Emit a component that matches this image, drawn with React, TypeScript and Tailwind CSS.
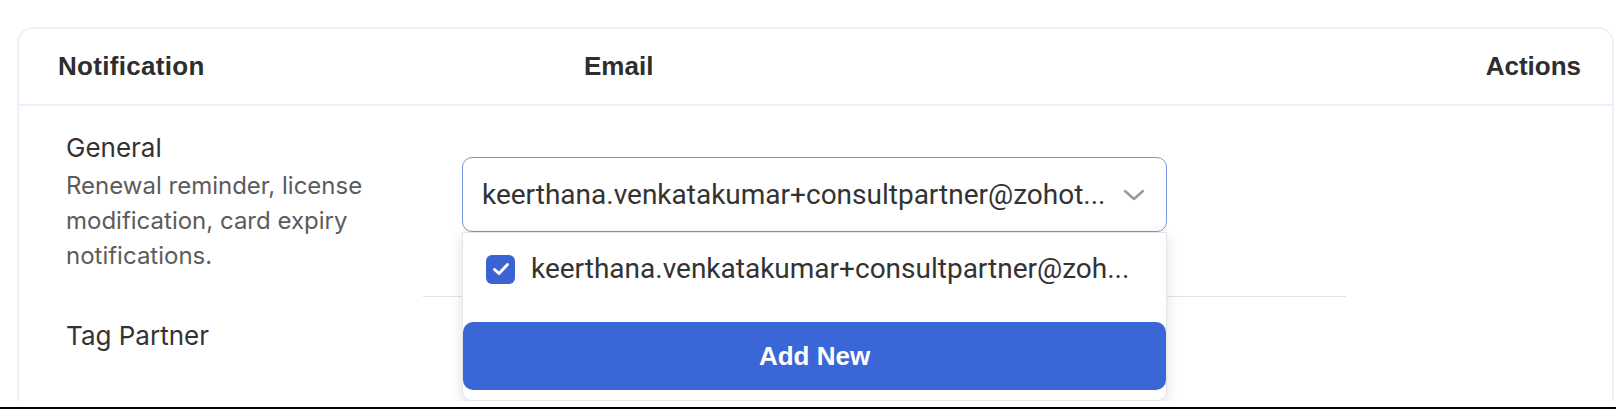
const EMAIL = "keerthana.venkatakumar+consultpartner@zohot...";
const EMAIL_ITEM = "keerthana.venkatakumar+consultpartner@zoh...";

const Chevron = () => (
    <svg width="22" height="12" viewBox="0 0 22 12" fill="none">
        <polyline points="2,2 11,10 20,2" stroke="#9a9a9a" strokeWidth="2.5" strokeLinecap="round" strokeLinejoin="round" />
    </svg>
);

const CheckBox = () => (
    <div className="w-[29px] h-[29px] rounded-[6px] bg-[#3b63d3] flex items-center justify-center shrink-0">
        <svg width="18" height="14" viewBox="0 0 18 14" fill="none">
            <polyline points="2.5,7.5 7,11.5 15.5,2.5" stroke="#ffffff" strokeWidth="3" strokeLinecap="round" strokeLinejoin="round" />
        </svg>
    </div>
);

const EmailSelect = () => {
    return (
        <div className="relative w-[705px] h-[75px]">
            {/* closed select */}
            <div className="h-full flex items-center justify-between pl-[19px] pr-[21px] border-[1.5px] border-[#7494e4] rounded-[10px] bg-white">
                <span className="text-[28px] text-[#333333] font-['Roboto',sans-serif] whitespace-nowrap">{EMAIL}</span>
                <Chevron />
            </div>

            {/* open menu */}
            <div className="absolute left-0 top-full w-full h-[169px] flex flex-col bg-white rounded-b-[10px] border border-[#e6e6e6] shadow-[0_4px_14px_rgba(0,0,0,0.13)] z-10">
                <div className="h-[72px] flex items-center pl-[23px] gap-[16px]">
                    <CheckBox />
                    <span className="text-[28px] text-[#333333] font-['Roboto',sans-serif] whitespace-nowrap">{EMAIL_ITEM}</span>
                </div>
                <button className="mt-[17px] h-[68px] w-full rounded-[10px] bg-[#3b66d6] text-white text-[26px] font-bold font-['Liberation_Sans',Arial,sans-serif]">
                    Add New
                </button>
            </div>
        </div>
    );
};

export default function App() {
    return (
        <div className="w-[1616px] h-[410px] bg-white">
            <div className="h-[401px] overflow-hidden">
                <div className="ml-[17px] mt-[27px] w-[1597px] h-[420px] border-2 border-[#f0eefc] rounded-t-[16px] bg-white">
                    {/* Header */}
                    <div className="h-[77px] flex items-center border-b-2 border-[#efedfc] text-[26px] font-bold text-[#2e2e2e] font-['Liberation_Sans',Arial,sans-serif]">
                        <div className="w-[565px] pl-[39px] tracking-[0.3px]">Notification</div>
                        <div className="flex-1">Email</div>
                        <div className="pr-[31px]">Actions</div>
                    </div>

                    {/* General row */}
                    <div className="h-[190px] flex">
                        <div className="w-[443px] pl-[47px] pt-[25px] font-['Inter',sans-serif]">
                            <div className="text-[26px] leading-[34px] text-[#333333]">General</div>
                            <p className="mt-[3px] w-[330px] text-[24px] leading-[35px] text-[#5c5c5c]">
                                Renewal reminder, license modification, card expiry notifications.
                            </p>
                        </div>
                        <div className="pt-[51px]">
                            <EmailSelect />
                        </div>
                    </div>
                    <div className="ml-[404px] w-[923px] h-px bg-[#e2e2e2]"></div>

                    {/* Tag Partner row */}
                    <div className="pl-[47px] pt-[22px] font-['Inter',sans-serif] text-[26px] leading-[34px] text-[#333333]">
                        Tag Partner
                    </div>
                </div>
            </div>
            <div className="mt-[6px] h-[2px] bg-black"></div>
        </div>
    );
}
